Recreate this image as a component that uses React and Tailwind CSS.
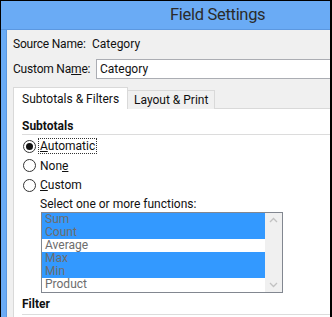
import React from 'react';

const font = { fontFamily: 'Roboto, "Open Sans", "Liberation Sans", sans-serif' };

function Radio({ checked, children, focus }) {
  return (
    <div className="flex items-center h-[19.5px]">
      <span className="w-[13px] h-[13px] rounded-full border border-[#333] bg-white flex items-center justify-center ml-[1px]">
        {checked && <span className="w-[7px] h-[7px] rounded-full bg-[#111]" />}
      </span>
      <span
        className={`ml-[3px] px-[1px] leading-[14px] text-[#111] ${
          focus ? 'outline outline-1 outline-dotted outline-[#333]' : ''
        }`}
      >
        {children}
      </span>
    </div>
  );
}

const items = [
  { label: 'Sum', on: true },
  { label: 'Count', on: true },
  { label: 'Average', on: false },
  { label: 'Max', on: true },
  { label: 'Min', on: true },
  { label: 'Product', on: false },
];

export default function App() {
  return (
    <div
      className="w-[332px] h-[317px] overflow-hidden bg-[#6aabf5] border-l border-t border-r-2 border-black flex flex-col"
      style={font}
    >
      {/* Title bar */}
      <div className="h-[29px] shrink-0 border-b border-[#5c98e0] pl-[169px] flex items-center">
        <span className="text-[16.5px] tracking-[-0.3px] text-[#2b2b2b] leading-none pt-[1px] whitespace-nowrap">
          Field Settings
        </span>
      </div>

      <div className="flex flex-1 min-h-0">
        {/* left frame */}
        <div className="w-[6px] shrink-0 border-r border-[#5c98e0]" />

        {/* window body */}
        <div className="flex-1 bg-[#f0f0f0] flex flex-col pl-[6px] text-[12px] text-[#111]">
          <div className="flex items-center h-[16px] mt-[6px] whitespace-nowrap">
            <span className="w-[79px] tracking-[-0.2px]">Source Name:</span>
            <span>Category</span>
          </div>

          <div className="flex items-center h-[20px] mt-[7px]">
            <span className="w-[83px] whitespace-nowrap tracking-[-0.2px]">
              Custom Na<span className="underline">m</span>e:
            </span>
            <div className="flex-1 h-[20px] border border-r-0 border-[#abadb3] bg-white pl-[3px] flex items-center">
              Category
            </div>
          </div>

          {/* Tabs */}
          <div className="flex items-end mt-[8px] h-[22px] relative z-10 whitespace-nowrap">
            <div className="h-[22px] w-[115px] border border-b-0 border-[#d9d9d9] bg-white pl-[8px] flex items-center">
              Subtotals &amp; Filters
            </div>
            <div className="h-[19px] w-[87px] border border-l-0 border-b-0 border-[#d9d9d9] bg-[#f0f0f0] pl-[6px] flex items-center">
              Layout &amp; Print
            </div>
          </div>

          {/* Panel */}
          <div className="flex-1 -mt-[1px] border-l border-t border-[#d9d9d9] bg-white pl-[8px] flex flex-col">
            <div className="h-[18px] mt-[8px] border-b border-[#dcdcdc] font-bold flex items-center">
              Subtotals
            </div>
            <div className="mt-[1.5px]">
              <Radio checked focus>
                <span className="underline">A</span>utomatic
              </Radio>
              <Radio>
                Non<span className="underline">e</span>
              </Radio>
              <Radio>
                <span className="underline">C</span>ustom
              </Radio>
            </div>

            <div className="pl-[18px] mt-[1px] h-[16px] flex items-center whitespace-nowrap">
              Select one or more functions:
            </div>

            <div className="ml-[19px] w-[242px] h-[81px] border border-[#828790] flex">
              <div className="flex-1 flex flex-col">
                {items.map((it) => (
                  <div
                    key={it.label}
                    className={`h-[13px] leading-[13px] pl-[3px] text-[#6d6d6d] ${it.on ? 'bg-[#3399ff]' : ''}`}
                  >
                    {it.label}
                  </div>
                ))}
              </div>
              <div className="w-[17px] bg-[#f0f0f0] flex flex-col justify-between items-center py-[4px]">
                <svg width="9" height="6" viewBox="0 0 9 6">
                  <path d="M1 5 L4.5 1.5 L8 5" fill="none" stroke="#c2c2c2" strokeWidth="1.3" />
                </svg>
                <svg width="9" height="6" viewBox="0 0 9 6">
                  <path d="M1 1 L4.5 4.5 L8 1" fill="none" stroke="#c2c2c2" strokeWidth="1.3" />
                </svg>
              </div>
            </div>

            <div className="h-[21px] mt-[1px] border-b border-[#dcdcdc] font-bold flex items-center">Filter</div>
          </div>
        </div>
      </div>
    </div>
  );
}
